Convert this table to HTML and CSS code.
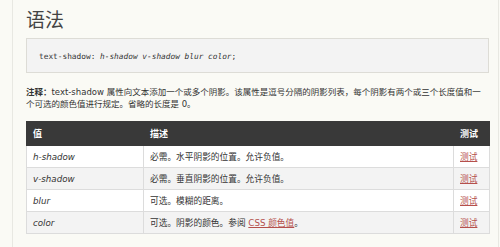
FILE: index.html
```html
<!DOCTYPE html>
<html lang="zh-CN">
<head>
<meta charset="utf-8">
<title>text-shadow 语法</title>
<link rel="stylesheet" href="styles.css">
</head>
<body>
<div class="page">
  <h2 class="title">语法</h2>
  <pre class="code">text-shadow: <i>h-shadow</i> <i>v-shadow</i> <i>blur</i> <i>color</i>;</pre>
  <p class="note"><b class="label">注释：</b>text-shadow 属性向文本添加一个或多个阴影。该属性是逗号分隔的阴影列表，每个阴影有两个或三个长度值和一个可选的颜色值进行规定。省略的长度是 0。</p>
  <table class="props">
    <colgroup><col class="c1"><col class="c2"><col class="c3"></colgroup>
    <thead>
      <tr><th>值</th><th>描述</th><th>测试</th></tr>
    </thead>
    <tbody>
      <tr><td><i>h-shadow</i></td><td>必需。水平阴影的位置。允许负值。</td><td><a href="#">测试</a></td></tr>
      <tr><td><i>v-shadow</i></td><td>必需。垂直阴影的位置。允许负值。</td><td><a href="#">测试</a></td></tr>
      <tr><td><i>blur</i></td><td>可选。模糊的距离。</td><td><a href="#">测试</a></td></tr>
      <tr><td><i>color</i></td><td>可选。阴影的颜色。参阅 <a href="#">CSS 颜色值</a>。</td><td><a href="#">测试</a></td></tr>
    </tbody>
  </table>
</div>
</body>
</html>
```
FILE: styles.css
```css
html, body {
  margin: 0;
  padding: 0;
  background: #fafaf5;
}
body {
  font-family: "DejaVu Sans", "Noto Sans CJK SC", sans-serif;
  color: #333;
}
.page {
  margin-left: 12px;
  width: 463px;
  padding: 7px 9px 20px 13px;
  border-left: 1px solid #e8e8e2;
  border-right: 1px solid #e8e8e2;
  min-height: 230px;
}
.title {
  margin: 0 0 7px;
  font-family: "Noto Sans CJK SC", sans-serif;
  font-size: 19px;
  line-height: 24px;
  font-weight: normal;
  color: #444;
}
.code {
  margin: 0;
  height: 33px;
  padding: 0 12px;
  background: #f3f3f3;
  border: 1px solid #dddcd6;
  font-family: "DejaVu Sans Mono", monospace;
  font-size: 7.8px;
  line-height: 35px;
  color: #333;
}
.code i { font-style: italic; }
.note {
  margin: 12px 0 11px;
  font-size: 8.5px;
  line-height: 12px;
  color: #333;
}
.label {
  font-family: "Noto Sans CJK SC", sans-serif;
  font-weight: bold;
}
.props {
  width: 463px;
  border-collapse: collapse;
  font-size: 8.7px;
  table-layout: fixed;
}
.c1 { width: 117px; }
.c2 { width: 310px; }
.c3 { width: 36px; }
.props th {
  background: #393939;
  color: #fff;
  font-weight: bold;
  font-size: 9px;
  text-align: left;
  height: 23px;
  padding: 0 6px;
  border: 1px solid #393939;
}
.props td {
  height: 21px;
  padding: 0 6px;
  border: 1px solid #dcdcdc;
  background: #fff;
}
.props tbody tr:nth-child(even) td { background: #f3f3f3; }
.props a {
  color: #b5504c;
  text-decoration: underline;
}
```
